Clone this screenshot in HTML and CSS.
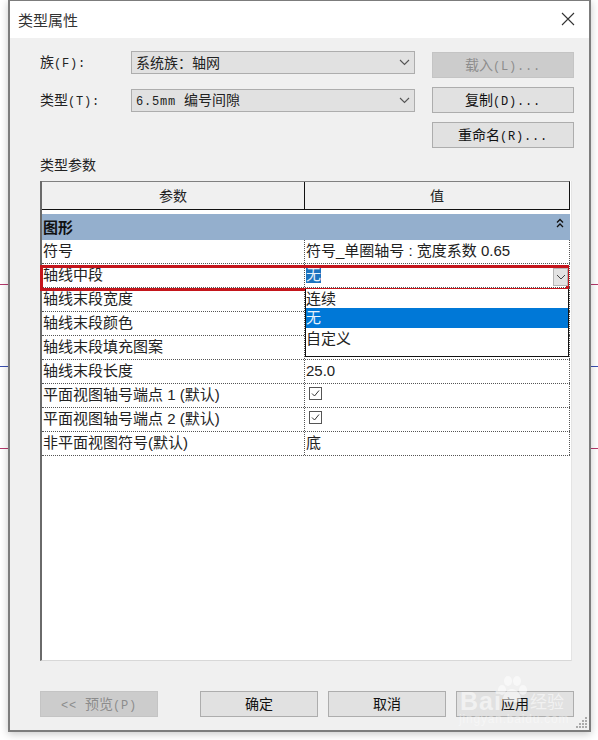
FILE: index.html
```html
<!DOCTYPE html>
<html lang="zh-CN">
<head>
<meta charset="utf-8">
<title>类型属性</title>
<link rel="stylesheet" href="styles.css">
</head>
<body>
<span class="bg-line line-a"></span><span class="bg-line line-a right"></span>
<span class="bg-line line-b"></span><span class="bg-line line-b right"></span>
<span class="bg-line line-c"></span><span class="bg-line line-c right"></span>
<main class="dialog">
  <header class="titlebar">
    <span class="title">类型属性</span>
    <svg class="close" width="14" height="14" viewBox="0 0 14 14"><path d="M1 1L13 13M13 1L1 13" stroke="#333" stroke-width="1.1" fill="none"/></svg>
  </header>
  <div class="content">
    <section class="top">
      <div class="fields">
        <div class="field">
          <label class="label">族<span class="lat">(F):</span></label>
          <div class="select"><span>系统族：轴网</span>
            <svg class="chev" width="11" height="7" viewBox="0 0 11 7"><path d="M1 1L5.5 5.5L10 1" stroke="#555" stroke-width="1.1" fill="none"/></svg></div>
        </div>
        <div class="field">
          <label class="label">类型<span class="lat">(T):</span></label>
          <div class="select"><span><span class="lat">6.5mm </span>编号间隙</span>
            <svg class="chev" width="11" height="7" viewBox="0 0 11 7"><path d="M1 1L5.5 5.5L10 1" stroke="#555" stroke-width="1.1" fill="none"/></svg></div>
        </div>
      </div>
      <div class="actions">
        <button class="btn disabled">载入<span class="lat">(L)...</span></button>
        <button class="btn">复制<span class="lat">(D)...</span></button>
        <button class="btn">重命名<span class="lat">(R)...</span></button>
      </div>
    </section>
    <h2 class="section-label">类型参数</h2>
    <section class="table">
      <div class="thead"><div class="th">参数</div><div class="th">值</div></div>
      <div class="group"><span>图形</span>
        <svg width="8" height="11" viewBox="0 0 8 11"><path d="M1 4.5L4 1.5L7 4.5M1 9L4 6L7 9" stroke="#111" stroke-width="1.3" fill="none"/></svg>
      </div>
      <div class="row"><div class="cell">符号</div><div class="cell val">符号_单圈轴号 : 宽度系数 0.65</div></div>
      <div class="row"><div class="cell">轴线中段</div><div class="cell val"><mark class="sel">无</mark></div></div>
      <div class="row"><div class="cell">轴线末段宽度</div><div class="cell val"></div></div>
      <div class="row"><div class="cell">轴线末段颜色</div><div class="cell val"></div></div>
      <div class="row"><div class="cell">轴线末段填充图案</div><div class="cell val"></div></div>
      <div class="row"><div class="cell">轴线末段长度</div><div class="cell val">25.0</div></div>
      <div class="row"><div class="cell">平面视图轴号端点 1 (默认)</div><div class="cell val">
        <svg class="check" width="13" height="13" viewBox="0 0 13 13"><rect x=".5" y=".5" width="12" height="12" fill="#fff" stroke="#555"/><path d="M3 6.5L5.5 9L10 3.5" stroke="#333" fill="none"/></svg></div></div>
      <div class="row"><div class="cell">平面视图轴号端点 2 (默认)</div><div class="cell val">
        <svg class="check" width="13" height="13" viewBox="0 0 13 13"><rect x=".5" y=".5" width="12" height="12" fill="#fff" stroke="#555"/><path d="M3 6.5L5.5 9L10 3.5" stroke="#333" fill="none"/></svg></div></div>
      <div class="row"><div class="cell">非平面视图符号(默认)</div><div class="cell val">底</div></div>
      <div class="highlight"></div>
      <div class="drop-btn"><svg width="10" height="6" viewBox="0 0 10 6"><path d="M1 1L5 5L9 1" stroke="#444" fill="none"/></svg></div>
      <ul class="dropdown">
        <li>连续</li>
        <li class="active">无</li>
        <li>自定义</li>
      </ul>
    </section>
    <footer class="bottom">
      <button class="btn wide disabled"><span class="lat">&lt;&lt; </span>预览<span class="lat">(P)</span></button>
      <span class="spacer"></span>
      <button class="btn wide">确定</button>
      <button class="btn wide">取消</button>
      <button class="btn wide">应用</button>
    </footer>
  </div>
  <div class="watermark">
    <svg class="paw" width="32" height="30" viewBox="0 0 32 30"><g fill="#fff"><ellipse cx="6" cy="15" rx="4" ry="5"/><ellipse cx="12" cy="6" rx="4" ry="5"/><ellipse cx="21" cy="6" rx="4" ry="5"/><ellipse cx="27" cy="15" rx="4" ry="5"/><path d="M16 14c5 0 9 6 9 10s-4 4-9 3-9 1-9-3 4-10 9-10z"/></g></svg>
    <span class="wm-bai">Bai</span><span class="wm-jy">经验</span>
    <span class="wm-url">jingyan.baidu.com</span>
  </div>
  <svg class="grip" width="12" height="12" viewBox="0 0 12 12"><g fill="#aaa"><rect x="9" y="0" width="2" height="2"/><rect x="6" y="3" width="2" height="2"/><rect x="9" y="3" width="2" height="2"/><rect x="3" y="6" width="2" height="2"/><rect x="6" y="6" width="2" height="2"/><rect x="9" y="6" width="2" height="2"/><rect x="0" y="9" width="2" height="2"/><rect x="3" y="9" width="2" height="2"/><rect x="6" y="9" width="2" height="2"/><rect x="9" y="9" width="2" height="2"/></g></svg>
</main>
</body>
</html>
```

FILE: styles.css
```css
* { box-sizing: border-box; }
html, body { height: 100%; }
body {
  margin: 0;
  background: #fff;
  overflow: hidden;
  font-family: "Noto Sans CJK SC", sans-serif;
  color: #222;
}
.bg-line { position: absolute; left: 0; width: 9px; height: 1px; }
.bg-line.right { left: 590px; width: 8px; }
.line-a { top: 284px; background: #b5386b; }
.line-b { top: 366px; background: #3a4fb0; }
.line-c { top: 448px; background: #b5386b; }

.dialog {
  position: relative;
  width: 583px;
  height: 732px;
  margin-left: 8px;
  display: flex;
  flex-direction: column;
  background: #f0f0f0;
  border: 1px solid #7c7c7c;
  border-width: 1px 2px 2px 2px;
  box-shadow: 0 2px 8px rgba(0,0,0,.22);
}
.titlebar {
  height: 37px;
  flex: none;
  background: #fff;
  display: flex;
  align-items: center;
  justify-content: space-between;
  padding: 0 14px 0 8px;
}
.title { font-size: 15px; line-height: 37px; color: #333; }
.close { margin-bottom: 1px; }

.content {
  flex: 1;
  display: flex;
  flex-direction: column;
  padding: 13px 15px 0 30px;
  font-size: 14px;
}
.lat { font-family: "Liberation Mono", monospace; font-size: 12px; letter-spacing: .8px; }

.top { display: flex; justify-content: space-between; height: 98px; flex: none; }
.fields { display: flex; flex-direction: column; gap: 15px; }
.field { display: flex; align-items: center; height: 23px; }
.label { width: 91px; line-height: 22px; padding-bottom: 1px; }
.select {
  width: 284px;
  height: 23px;
  padding: 0 4px 1px;
  background: #e1e1e1;
  border: 1px solid #adadad;
  display: flex;
  align-items: center;
  justify-content: space-between;
  line-height: 20px;
}

.actions { display: flex; flex-direction: column; gap: 9px; padding-top: 1px; }
.btn {
  width: 142px;
  height: 26px;
  padding: 0 0 2px;
  background: #e1e1e1;
  border: 1px solid #adadad;
  font: inherit;
  font-size: 14px;
  line-height: 22px;
  color: #111;
}
.btn.disabled { background: #cccccc; border-color: #c4c4c4; color: #8c8c8c; }
.btn.wide { width: 118px; flex: none; }

.section-label {
  margin: 5px 0 0;
  flex: none;
  font-size: 14px;
  font-weight: 400;
  line-height: 20px;
  height: 27px;
}

.table {
  position: relative;
  flex: none;
  width: 532px;
  height: 480px;
  background: #fff;
  border-left: 2px solid #6a6a6a;
  border-bottom: 1px solid #d8d8d8;
  border-right: 1px solid #e4e4e4;
  font-size: 15px;
}
.thead {
  display: grid;
  grid-template-columns: 262px 265px;
  height: 29px;
  width: 528px;
  background: #f0f0f0;
  border-top: 1px solid #808080;
  border-bottom: 1px solid #111;
  border-right: 1px solid #111;
}
.th { text-align: center; line-height: 27px; font-size: 14px; color: #222; }
.th + .th { border-left: 1px solid #111; }
.group {
  margin-top: 4px;
  height: 26px;
  width: 528px;
  background: #94afcd;
  display: flex;
  align-items: center;
  justify-content: space-between;
  padding: 0 6px 2px 1px;
  font-weight: 700;
  color: #111;
}
.group svg { margin-bottom: 5px; }
.row {
  display: grid;
  grid-template-columns: 262px 266px;
  width: 528px;
  height: 24px;
  line-height: 22px;
  border-bottom: 1px dotted #555;
}
.cell { padding-left: 1px; font-family: "Liberation Sans", "Noto Sans CJK SC", sans-serif; white-space: nowrap; }
.val {
  padding-left: 1px;
  border-left: 1px dotted #555;
  border-right: 1px dotted #555;
}
.check { display: block; margin: 3px 0 0 3px; }
.sel { background: #1c73c0; color: #e8f2fb; }

.highlight {
  position: absolute;
  left: -2px;
  top: 84px;
  width: 529px;
  height: 26px;
  border: 3px solid #c4161c;
}
.drop-btn {
  position: absolute;
  left: 511px;
  top: 87px;
  width: 15px;
  height: 18px;
  background: #e3e3e3;
  border: 1px solid #b5b5b5;
  display: flex;
  align-items: center;
  justify-content: center;
}
.dropdown {
  position: absolute;
  left: 263px;
  top: 108px;
  width: 264px;
  height: 68px;
  margin: 0;
  padding: 0;
  list-style: none;
  background: #fff;
  border: 1px solid #111;
  border-top: 0;
}
.dropdown li { height: 19px; line-height: 18px; white-space: nowrap; }
.dropdown li.active { height: 20px; background: #0078d7; color: #e8f2fb; }
.dropdown li.active + li { line-height: 20px; }

.bottom { display: flex; gap: 10px; margin-top: 30px; flex: none; }
.spacer { width: 22px; flex: none; }

.watermark {
  position: absolute;
  left: 446px;
  top: 672px;
  width: 114px;
  height: 56px;
  color: #fff;
  opacity: .55;
}
.paw { position: absolute; left: 40px; top: 2px; }
.wm-bai {
  position: absolute; left: 4px; top: 14px;
  font: 700 25px/28px "Liberation Sans", sans-serif;
  letter-spacing: 1px;
}
.wm-jy { position: absolute; left: 74px; top: 17px; font-size: 17px; line-height: 22px; }
.wm-url {
  position: absolute; left: 3px; top: 38px;
  font: 12px/16px "Liberation Sans", sans-serif;
  letter-spacing: .8px;
  white-space: nowrap;
  opacity: .8;
}
.grip { position: absolute; right: 1px; bottom: 1px; }
```
